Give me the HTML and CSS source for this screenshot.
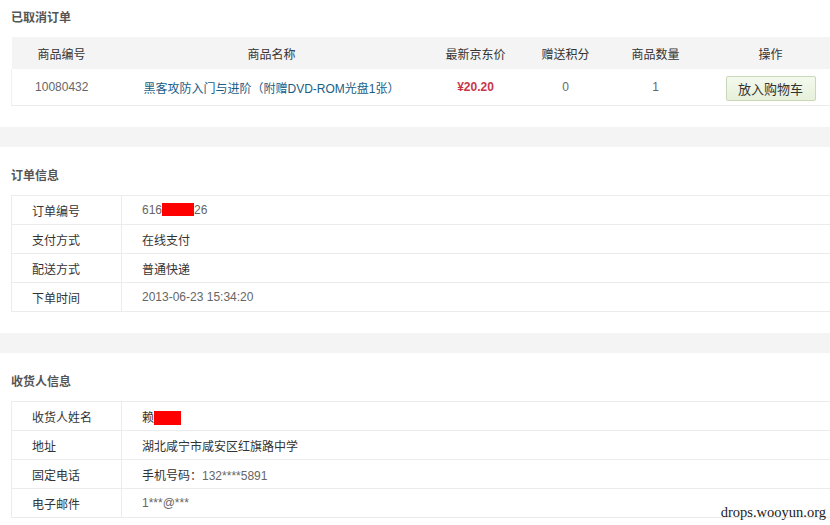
FILE: index.html
```html
<!DOCTYPE html>
<html lang="zh-CN">
<head>
<meta charset="utf-8">
<title>已取消订单</title>
<link rel="stylesheet" href="styles.css">
</head>
<body>
<div class="page">
  <section class="section first">
    <h2 class="title">已取消订单</h2>
    <table class="goods">
      <colgroup>
        <col class="c1"><col class="c2"><col class="c3"><col class="c4"><col class="c5"><col class="c6">
      </colgroup>
      <thead>
        <tr><th>商品编号</th><th>商品名称</th><th>最新京东价</th><th>赠送积分</th><th>商品数量</th><th>操作</th></tr>
      </thead>
      <tbody>
        <tr>
          <td class="num">10080432</td>
          <td><a class="link" href="#">黑客攻防入门与进阶（附赠DVD-ROM光盘1张）</a></td>
          <td class="price">¥20.20</td>
          <td class="num">0</td>
          <td class="num">1</td>
          <td><button class="btn" type="button">放入购物车</button></td>
        </tr>
      </tbody>
    </table>
  </section>
  <div class="band"></div>
  <section class="section">
    <h2 class="title">订单信息</h2>
    <table class="info">
      <tr><td class="label">订单编号</td><td class="value num">616<span class="mask mask-order"></span>26</td></tr>
      <tr><td class="label">支付方式</td><td class="value">在线支付</td></tr>
      <tr><td class="label">配送方式</td><td class="value">普通快递</td></tr>
      <tr><td class="label">下单时间</td><td class="value num">2013-06-23 15:34:20</td></tr>
    </table>
  </section>
  <div class="band"></div>
  <section class="section">
    <h2 class="title">收货人信息</h2>
    <table class="info">
      <tr><td class="label">收货人姓名</td><td class="value">赖<span class="mask mask-name"></span></td></tr>
      <tr><td class="label">地址</td><td class="value">湖北咸宁市咸安区红旗路中学</td></tr>
      <tr><td class="label">固定电话</td><td class="value">手机号码：<span class="num">132****5891</span></td></tr>
      <tr><td class="label">电子邮件</td><td class="value num">1***@***</td></tr>
    </table>
  </section>
  <div class="watermark">drops.wooyun.org</div>
</div>
</body>
</html>
```
FILE: styles.css
```css
html, body {
  margin: 0;
  padding: 0;
  overflow: hidden;
  background: #fff;
}
body {
  font-family: "Liberation Sans", "Noto Sans CJK SC", sans-serif;
  font-size: 12px;
  color: #333;
}
.page {
  position: relative;
  width: 830px;
  height: 525px;
  overflow: hidden;
  padding-top: 8px;
  box-sizing: border-box;
}
.section {
  padding: 19px 0 21px 0;
}
.section.first {
  padding-top: 0;
}
.title {
  margin: 0 0 9px 11px;
  height: 20px;
  line-height: 20px;
  font-size: 12px;
  font-weight: bold;
  color: #555;
}
.band {
  height: 20px;
  background: #f4f4f4;
}
table {
  border-collapse: collapse;
  margin-left: 11px;
  width: 830px;
  table-layout: fixed;
}
.goods .c1 { width: 100px; }
.goods .c2 { width: 320px; }
.goods .c3 { width: 88px; }
.goods .c4 { width: 92px; }
.goods .c5 { width: 88px; }
.goods .c6 { width: 142px; }
.goods th {
  height: 32px;
  padding: 0;
  background: #f4f4f4;
  font-weight: normal;
  color: #333;
  text-align: center;
}
.goods td {
  height: 36px;
  padding: 0;
  text-align: center;
  border-bottom: 1px solid #ececec;
}
.goods tbody tr td:first-child {
  border-left: 1px solid #f0f0f0;
}
.num {
  color: #666;
}
.link {
  color: #1b5d85;
  text-decoration: none;
}
.price {
  color: #c8374b;
  font-weight: bold;
}
.btn {
  font-family: inherit;
  font-size: 13px;
  color: #333;
  width: 90px;
  height: 25px;
  padding: 0;
  border: 1px solid #c8d8b8;
  border-radius: 2px;
  background: linear-gradient(#f4f9ee, #e6f0da);
  position: relative;
  top: 1px;
}
.info td {
  height: 28px;
  padding: 0;
  border: 1px solid #ececec;
}
.info .label {
  width: 89px;
  padding-left: 20px;
  color: #333;
}
.info .value {
  padding-left: 20px;
  color: #333;
}
.info .value.num,
.info .value .num {
  color: #666;
}
.mask {
  display: inline-block;
  background: #f00;
  vertical-align: -2px;
}
.mask-order {
  width: 32px;
  height: 13px;
}
.mask-name {
  width: 27px;
  height: 14px;
  vertical-align: -3px;
}
.watermark {
  position: absolute;
  right: 4px;
  bottom: 4px;
  font-family: "Liberation Serif", serif;
  font-size: 14.5px;
  color: #222;
}
```
